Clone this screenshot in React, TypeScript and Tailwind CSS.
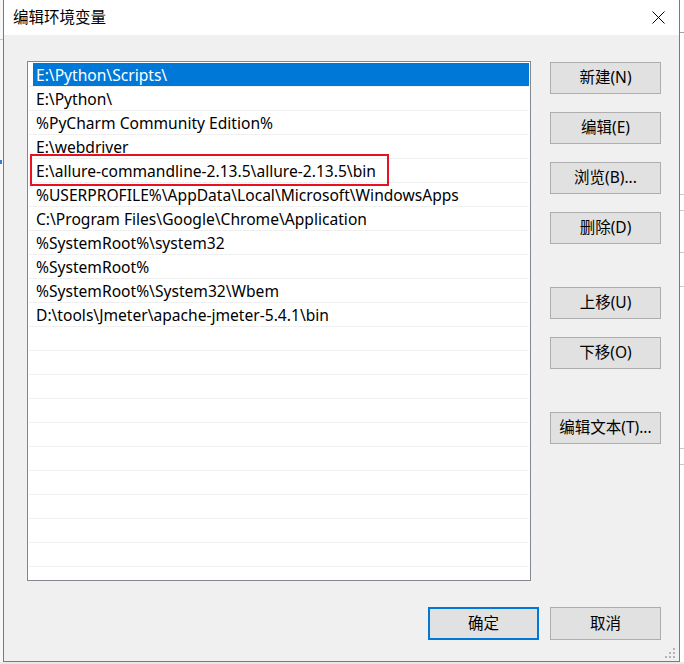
import React from "react";

const rows = [
  "E:\\Python\\Scripts\\",
  "E:\\Python\\",
  "%PyCharm Community Edition%",
  "E:\\webdriver",
  "E:\\allure-commandline-2.13.5\\allure-2.13.5\\bin",
  "%USERPROFILE%\\AppData\\Local\\Microsoft\\WindowsApps",
  "C:\\Program Files\\Google\\Chrome\\Application",
  "%SystemRoot%\\system32",
  "%SystemRoot%",
  "%SystemRoot%\\System32\\Wbem",
  "D:\\tools\\Jmeter\\apache-jmeter-5.4.1\\bin",
];

const font = { fontFamily: '"Noto Sans", "Noto Sans CJK SC", sans-serif' };

function Btn({ label }: { label: string }) {
  return (
    <div className="w-[111px] h-[32px] flex items-center justify-center bg-[#e1e1e1] text-[15.5px] text-black leading-none border border-[#adadad]">
      {label}
    </div>
  );
}

export default function App() {
  const allRows = Array.from({ length: 22 }, (_, i) => rows[i] ?? "");
  return (
    <div className="w-[684px] h-[664px] bg-white overflow-hidden flex flex-col" style={font}>
      <div className="flex h-[662px]">
        {/* left background strip */}
        <div className="w-[3px] bg-[#f7f7f7] flex flex-col">
          <div className="h-[40px] border-b border-[#c8c8c8]" />
          <div className="h-[120px]" />
          <div className="h-[4px] bg-[#3a7bd5] w-[2px]" />
        </div>
        {/* window */}
        <div className="w-[677px] h-[662px] border-l border-r border-b border-[#7a7a7a] flex flex-col">
          {/* title bar */}
          <div className="h-[35px] bg-white flex items-center justify-between pl-[9px] pr-[14px] shrink-0">
            <span className="text-[15.5px] text-black leading-none">编辑环境变量</span>
            <svg width="13" height="13" viewBox="0 0 13 13">
              <path d="M0.5 0.5 L12.5 12.5 M12.5 0.5 L0.5 12.5" stroke="#000" strokeWidth="1" />
            </svg>
          </div>
          {/* client */}
          <div className="flex-1 bg-[#f0f0f0] relative pt-[26px] pl-[23px] pr-[18px] flex flex-col">
            <div className="flex">
              {/* list */}
              <div className="w-[504px] h-[520px] border border-[#828790] bg-white relative overflow-hidden pt-[1px] px-[1px]">
                {allRows.map((r, i) => (
                  <div key={i} className="h-[24px] border-b border-[#f0f0f0] flex">
                    <div
                      className={
                        "ml-[4px] flex-1 pl-[3px] flex items-center text-[15.6px] leading-none whitespace-nowrap " +
                        (i === 0 ? "bg-[#0078d7] text-white" : "text-black")
                      }
                    >
                      <span className="pt-[2px]">{r}</span>
                    </div>
                  </div>
                ))}
                <div className="absolute left-[2px] top-[92px] w-[359px] h-[32px] border-2 border-[#e81123]" />
              </div>
              {/* buttons */}
              <div className="ml-[19px] pt-[1px] flex flex-col">
                <Btn label="新建(N)" />
                <div className="h-[18px]" />
                <Btn label="编辑(E)" />
                <div className="h-[18px]" />
                <Btn label="浏览(B)..." />
                <div className="h-[18px]" />
                <Btn label="删除(D)" />
                <div className="h-[43px]" />
                <Btn label="上移(U)" />
                <div className="h-[18px]" />
                <Btn label="下移(O)" />
                <div className="h-[43px]" />
                <Btn label="编辑文本(T)..." />
              </div>
            </div>
            <div className="flex justify-end gap-[11px] mt-[26px]">
              <div className="w-[111px] h-[33px] flex items-center justify-center bg-[#e1e1e1] border-2 border-[#0078d7] text-[15.5px] leading-none">
                确定
              </div>
              <div className="w-[111px] h-[33px] flex items-center justify-center bg-[#e1e1e1] border border-[#adadad] text-[15.5px] leading-none">
                取消
              </div>
            </div>
            {/* resize grip */}
            <svg className="absolute right-[3px] bottom-[2px]" width="11" height="11" viewBox="0 0 11 11">
              <rect x="8" y="0" width="2" height="2" fill="#b4b4b4" />
              <rect x="4" y="4" width="2" height="2" fill="#b4b4b4" />
              <rect x="8" y="4" width="2" height="2" fill="#b4b4b4" />
              <rect x="0" y="8" width="2" height="2" fill="#b4b4b4" />
              <rect x="4" y="8" width="2" height="2" fill="#b4b4b4" />
              <rect x="8" y="8" width="2" height="2" fill="#b4b4b4" />
            </svg>
          </div>
        </div>
        {/* right background strip */}
        <div className="w-[4px] bg-white flex flex-col">
          <div className="h-[33px] border-b border-[#a0a0a0]" />
          <div className="h-[162px] border-b border-[#c8c8c8]" />
          <div className="h-[16px] border-b border-[#c8c8c8]" />
          <div className="h-[42px] border-b border-[#c8c8c8]" />
          <div className="h-[34px] border-b border-[#c8c8c8]" />
          <div className="h-[162px] border-b border-[#c8c8c8]" />
          <div className="h-[16px] border-b border-[#c8c8c8]" />
        </div>
      </div>
      <div className="h-[2px] bg-[#e8e8e8]" />
    </div>
  );
}
